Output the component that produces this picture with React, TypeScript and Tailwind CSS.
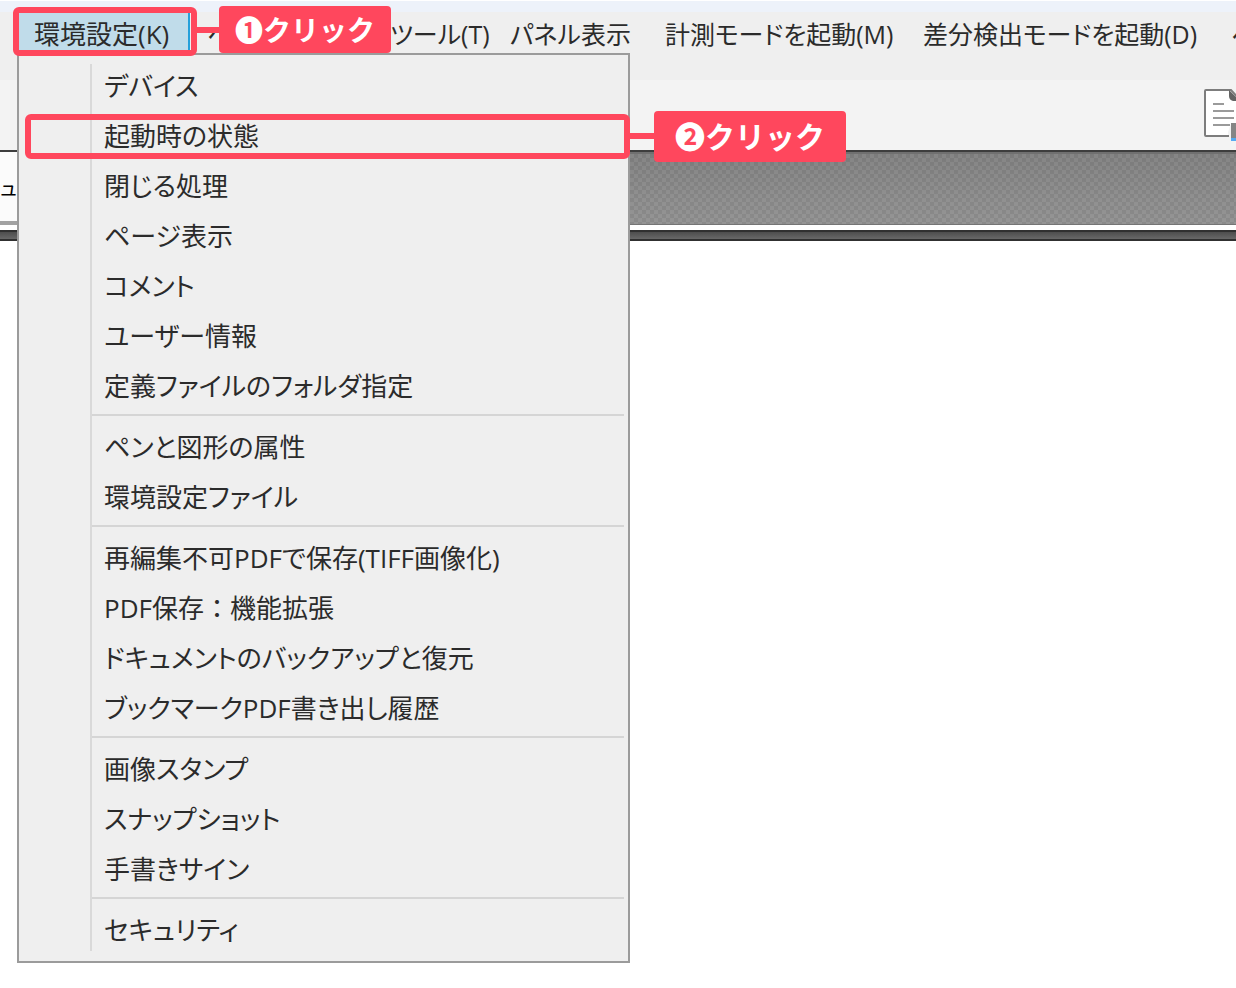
import type { ReactNode } from 'react';

const menuGroups = [
  ['デバイス', '起動時の状態', '閉じる処理', 'ページ表示', 'コメント', 'ユーザー情報', '定義ファイルのフォルダ指定'],
  ['ペンと図形の属性', '環境設定ファイル'],
  ['再編集不可PDFで保存(TIFF画像化)', 'PDF保存：機能拡張', 'ドキュメントのバックアップと復元', 'ブックマークPDF書き出し履歴'],
  ['画像スタンプ', 'スナップショット', '手書きサイン'],
  ['セキュリティ'],
];

const barItems = [
  { label: 'ヘ', width: 'w-[183px]' },
  { label: 'ツール(T)', width: 'w-[120px]' },
  { label: 'パネル表示', width: 'w-[155px]' },
  { label: '計測モードを起動(M)', width: 'w-[258px]' },
  { label: '差分検出モードを起動(D)', width: 'w-[308px]' },
  { label: 'ヘ', width: 'w-[44px]' },
];

function Callout({ children, className }: { children: ReactNode; className: string }) {
  return (
    <span
      className={`pointer-events-none absolute z-20 flex items-center justify-center whitespace-nowrap rounded-[4px] bg-[#ff475d] font-bold text-white [font-feature-settings:normal] ${className}`}
    >
      {children}
    </span>
  );
}

function SettingsMenu() {
  return (
    <div className="absolute left-[-2px] top-[41px] z-10 flex w-[613px] border-2 border-[#9b9b9b] bg-[#efefef] pb-[6px] pt-[6px] text-[26px]">
      <div className="mb-1 mt-[3px] w-[73px] shrink-0 border-r-2 border-[#d9d9d9]" />
      <div role="menu" className="mr-1 flex-1">
        {menuGroups.map((group, index) => (
          <div key={group[0]} role="group">
            {index > 0 && <div role="separator" className="mb-[6px] mt-[3px] h-[2px] bg-[#d5d5d5]" />}
            {group.map((label) => (
              <div key={label} className="relative">
                <button
                  type="button"
                  role="menuitem"
                  className={`flex h-[50px] w-full items-center whitespace-nowrap pl-3 text-left ${
                    label.includes('：') ? '[font-feature-settings:normal]' : ''
                  }`}
                >
                  {label}
                </button>
                {label === '起動時の状態' && (
                  <>
                    <span className="pointer-events-none absolute -right-[6px] bottom-[2px] left-[-67px] top-[3px] rounded-[6px] border-[6px] border-[#ff475d]" />
                    <span className="absolute left-full top-[22px] ml-1 h-[6px] w-8 bg-[#ff475d]" />
                    <Callout className="left-full top-0 ml-[30px] h-[51px] w-[192px] text-[30px]">❷クリック</Callout>
                  </>
                )}
              </div>
            ))}
          </div>
        ))}
      </div>
    </div>
  );
}

function DocumentIcon() {
  return (
    <svg width="48" height="56" viewBox="0 0 48 56" fill="none" className="shrink-0">
      <path d="M1 2v44q0 1 1 1h22V43l3-9h9V12L27 1H2q-1 0-1 1z" fill="#fff" />
      <path d="M25 47H2q-1 0-1-1V2q0-1 1-1h25l9 10v24" stroke="#7d7d7d" strokeWidth="2" />
      <path d="M25 1l11 11h-7q-4-1-4-5z" fill="#636363" />
      <path d="M9 15h11M9 22h21M9 29h21M9 36h17" stroke="#9a9a9a" strokeWidth="2" />
      <path d="M27 34h14v15H27z" fill="#858585" />
      <path d="M27 49h14v3H27z" fill="#55aaf2" />
    </svg>
  );
}

export default function App() {
  return (
    <div className="min-h-screen overflow-hidden bg-white font-['Open_Sans','Noto_Sans_CJK_JP',sans-serif] text-[25px] leading-none text-[#2b2b2b] [font-feature-settings:'palt']">
      <div className="h-3 border-t border-white bg-[#edf2fa]" />
      <nav className="relative z-10 flex h-[68px] items-start bg-[#efefef] pl-[19px]">
        <div className="relative shrink-0">
          <button
            type="button"
            className="flex h-[44px] w-[171px] items-center whitespace-nowrap border-r-2 border-[#26a0da] bg-[#c0dcea] pl-[15px] text-[26px]"
          >
            環境設定(K)
          </button>
          <span className="pointer-events-none absolute -left-[6px] -right-[7px] -top-[5px] bottom-0 z-20 rounded-[6px] border-[6px] border-[#ff475d]" />
          <span className="absolute left-full top-[15px] z-20 ml-[6px] h-[6px] w-6 bg-[#ff475d]" />
          <Callout className="left-full -top-[6px] ml-[29px] h-[47px] w-[172px] text-[28px]">❶クリック</Callout>
          <SettingsMenu />
        </div>
        <div className="flex min-w-0 flex-1 overflow-hidden">
          {barItems.map((item, index) => (
            <button
              key={index}
              type="button"
              className={`flex h-[44px] shrink-0 items-center whitespace-nowrap pl-[17px] ${item.width}`}
            >
              {item.label}
            </button>
          ))}
        </div>
      </nav>
      <div className="flex h-[70px] justify-end overflow-hidden bg-[#f3f3f3] pt-[9px]">
        <div className="w-8 shrink-0">
          <DocumentIcon />
        </div>
      </div>
      <div className="flex h-[75px] border-t-2 border-[#3d3d3d]">
        <div className="flex w-[18px] shrink-0 items-center overflow-hidden whitespace-nowrap border-b-4 border-[#a2a2a2] bg-[#fbfbfb] pt-1 text-[20px] text-black">
          ュ
        </div>
        <div className="flex-1 border-b border-t-2 border-b-[#757575] border-t-[#707070] bg-[repeating-conic-gradient(#ffffff0a_0_25%,#0000000a_0_50%),linear-gradient(#808080,#919191)] bg-size-[8px_8px,100%_100%]" />
      </div>
      <div className="h-[5px] bg-white" />
      <div className="h-[11px] border-y-2 border-[#303030] bg-linear-to-b from-[#4d4d4d] to-[#686868]" />
    </div>
  );
}
